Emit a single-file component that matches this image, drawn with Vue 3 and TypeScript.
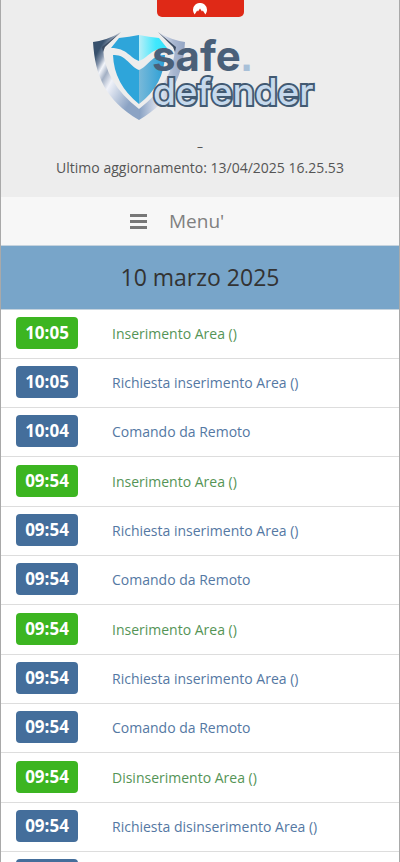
<script setup lang="ts">
interface LogEntry {
  time: string
  text: string
  kind: 'done' | 'request'
}

const request = (time: string, text: string): LogEntry => ({ time, text, kind: 'request' })
const done = (time: string, text: string): LogEntry => ({ time, text, kind: 'done' })

// Each group holds the steps of one remote command, newest first.
const groups: LogEntry[][] = [
  [
    done('10:05', 'Inserimento Area ()'),
    request('10:05', 'Richiesta inserimento Area ()'),
    request('10:04', 'Comando da Remoto'),
  ],
  [
    done('09:54', 'Inserimento Area ()'),
    request('09:54', 'Richiesta inserimento Area ()'),
    request('09:54', 'Comando da Remoto'),
  ],
  [
    done('09:54', 'Inserimento Area ()'),
    request('09:54', 'Richiesta inserimento Area ()'),
    request('09:54', 'Comando da Remoto'),
  ],
  [
    done('09:54', 'Disinserimento Area ()'),
    request('09:54', 'Richiesta disinserimento Area ()'),
    request('09:54', 'Comando da Remoto'),
  ],
]
</script>

<template>
  <div class="page">
    <header class="header">
      <div class="tab">
        <svg width="14" height="12" viewBox="0 0 14 12" aria-hidden="true">
          <path d="M1.6 11.4A7 7 0 1 1 12.4 11.4L9.8 7.6L9 8.4L7 5.6L5 8.4L4.2 7.6Z" fill="#fff" />
        </svg>
      </div>
      <svg class="logo" viewBox="92 28 224 96" role="img" aria-label="safe.defender">
        <defs>
          <linearGradient id="edgeLeft" gradientUnits="userSpaceOnUse" x1="93" y1="60" x2="139" y2="86">
            <stop offset="0" stop-color="#38516d" />
            <stop offset="0.12" stop-color="#8595ac" />
            <stop offset="0.22" stop-color="#f4f6fb" />
            <stop offset="0.34" stop-color="#a3b0c4" />
            <stop offset="0.5" stop-color="#f0f2f9" />
            <stop offset="1" stop-color="#8ba3c4" />
          </linearGradient>
          <linearGradient id="edgeRight" x1="0" y1="0" x2="1" y2="0">
            <stop offset="0" stop-color="#87a0c2" />
            <stop offset="0.45" stop-color="#e6e9f3" />
            <stop offset="0.75" stop-color="#a9b7d0" />
            <stop offset="1" stop-color="#93a5c4" />
          </linearGradient>
          <linearGradient id="cyan" x1="0" y1="0" x2="1" y2="0">
            <stop offset="0" stop-color="#b9eef7" />
            <stop offset="0.6" stop-color="#40e8fd" />
            <stop offset="1" stop-color="#35e2fb" />
          </linearGradient>
          <linearGradient id="steel" x1="0" y1="0" x2="1" y2="0">
            <stop offset="0" stop-color="#79b9d9" />
            <stop offset="1" stop-color="#2a9fd6" />
          </linearGradient>
        </defs>
        <path d="M93 42Q108 40 121 32L103 47Q104 82 139 109V120C105 100 95 75 93 42Z" fill="url(#edgeLeft)" />
        <path d="M185 42Q171 40 158 32L175 47Q174 82 139 109V120C173 100 183 75 185 42Z" fill="url(#edgeRight)" />
        <path d="M121 32L102 47L103 52L105 47Z" fill="#3b4c62" />
        <path d="M158 32L176 47L175 52L173 47Z" fill="#3b4c62" />
        <path d="M111 48L119 38Q129 37 139 35V61C130 58 127 48 111 48Z" fill="#2ea5da" />
        <path d="M139 35Q149 37 159 38L167 48C151 48 148 58 139 61Z" fill="url(#cyan)" />
        <path d="M113 55C126 54 129 66 139 70V104Q114 84 113 55Z" fill="#2ea5da" />
        <path d="M139 70C149 66 152 54 165 55Q164 85 139 104Z" fill="url(#steel)" />
        <text class="word safe" x="152" y="71">safe<tspan class="dot">.</tspan></text>
        <text class="word defender" x="153" y="105">defender</text>
      </svg>
      <p class="site">–</p>
      <p class="updated">Ultimo aggiornamento: 13/04/2025 16.25.53</p>
    </header>

    <button class="menu" type="button">
      <svg width="17" height="15" viewBox="0 0 17 15" aria-hidden="true">
        <path d="M0 0H17V3H0ZM0 6H17V9H0ZM0 12H17V15H0Z" fill="#777" />
      </svg>
      <span>Menu'</span>
    </button>

    <main>
      <h1 class="date">10 marzo 2025</h1>
      <ul v-for="(group, g) in groups" :key="g" class="group">
        <li v-for="(entry, i) in group" :key="i" class="row" :class="entry.kind">
          <time class="badge">{{ entry.time }}</time>
          <span class="text">{{ entry.text }}</span>
        </li>
      </ul>
    </main>
  </div>
</template>

<style>
body {
  margin: 0;
  background: #fff;
}
</style>

<style scoped>
.page {
  box-sizing: border-box;
  border: solid #a9a9a9;
  border-width: 0 1px;
  font-family: "Open Sans", "Noto Sans", sans-serif;
  background: #fff;
}

.header {
  display: flex;
  flex-direction: column;
  align-items: center;
  padding-bottom: 18px;
  background: #ededed;
}

.tab {
  display: flex;
  justify-content: center;
  align-items: flex-end;
  box-sizing: border-box;
  width: 87px;
  height: 17px;
  padding-bottom: 2px;
  border-radius: 0 0 5px 5px;
  background: #df2917;
}

.logo {
  width: 224px;
  height: 96px;
  margin: 11px 0 14px 8px;
}

.word {
  font-family: Inter, "Open Sans", sans-serif;
  font-weight: 700;
}

.safe {
  font-size: 42px;
  fill: #4a6079;
}

.dot {
  font-family: "Liberation Sans", sans-serif;
  fill: #a8c0d8;
}

.defender {
  font-size: 37px;
  font-weight: 500;
  fill: #c6d9ec;
  stroke: #425a72;
  stroke-width: 4px;
  paint-order: stroke;
}

.site,
.updated {
  margin: 0;
  color: #555;
}

.site {
  font-size: 12px;
  line-height: 18px;
}

.updated {
  font-size: 14px;
  line-height: 23px;
}

.menu {
  display: flex;
  align-items: center;
  gap: 22px;
  width: 100%;
  height: 48px;
  padding: 0 129px;
  border: 0;
  background: #f7f7f7;
  color: #808080;
  font-family: inherit;
  font-size: 19px;
}

.date {
  margin: 0;
  border: solid #c5d3de;
  border-width: 1px 0;
  background: #78a5c9;
  color: #333;
  font-size: 23px;
  font-weight: 400;
  line-height: 63px;
  text-align: center;
}

.group {
  margin: 0;
  padding: 0 0 1px;
  list-style: none;
}

.row {
  display: flex;
  align-items: center;
  gap: 34px;
  box-sizing: border-box;
  height: 49px;
  padding: 0 15px;
  border-bottom: 1px solid #ddd;
}

.badge {
  width: 62px;
  margin-bottom: 2px;
  border-radius: 4px;
  background: #446e9b;
  color: #fff;
  font-size: 17px;
  font-weight: 700;
  line-height: 32px;
  text-align: center;
}

.text {
  color: #5478a3;
  font-size: 14px;
  line-height: 22px;
}

.done .badge {
  background: #3cb521;
}

.done .text {
  color: #559456;
}
</style>
